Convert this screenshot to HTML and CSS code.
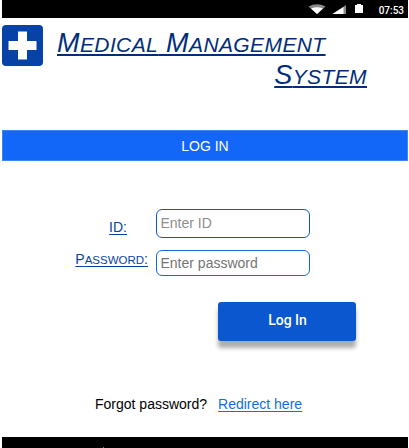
FILE: index.html
```
<!DOCTYPE html>
<html lang="en">
<head>
<meta charset="utf-8">
<title>Medical Management System</title>
<link rel="stylesheet" href="styles.css">
</head>
<body>
<div class="screen">
  <header class="status">
    <svg class="status-icons" width="56" height="18" viewBox="0 0 56 18">
      <path d="M-.5 6.500Q8 2 16.500 6.500L8 14Z" fill="#8a8a8a"/>
      <path d="M2 8.500Q8 6 14 8.500L8 14Z" fill="#fff"/>
      <path d="M23.500 14L37 5V14Z" fill="#8a8a8a"/>
      <path d="M23.500 14L34.500 7V14Z" fill="#fff"/>
      <path d="M46 5H48V4H52V5H54V13H46Z" fill="#fff"/>
    </svg>
    <span class="clock">07:53</span>
  </header>
  <div class="brand">
    <svg class="logo" width="41" height="41" viewBox="0 0 41 41">
      <rect width="41" height="41" rx="4" fill="#0743a6"/>
      <path d="M16 6.500H25V16H34.500V25H25V34.500H16V25H6.500V16H16Z" fill="#fff"/>
    </svg>
    <h1 class="title"><span class="line">M<span class="sc">edical</span> M<span class="sc">anagement</span></span><span class="line line-end">S<span class="sc">ystem</span></span></h1>
  </div>
  <div class="banner">LOG IN</div>
  <form class="form">
    <div class="row row-id">
      <div class="label"><label for="uid">ID:</label></div>
      <input class="field" id="uid" type="text" placeholder="Enter ID">
    </div>
    <div class="row row-pass">
      <div class="label label-caps"><label for="pass">P<span class="sc">assword</span>:</label></div>
      <input class="field" id="pass" type="password" placeholder="Enter password">
    </div>
    <button class="submit" type="button">Log In</button>
  </form>
  <p class="help"><span>Forgot password?</span><a href="#">Redirect here</a></p>
  <footer class="navbar"><span class="nav-mark"></span></footer>
</div>
</body>
</html>
```
FILE: styles.css
```
* { box-sizing: border-box; }
body {
  margin: 0;
  background: #fff;
  font-family: "Liberation Sans", Arial, sans-serif;
  font-size: 14px;
  overflow: hidden;
}
.screen {
  width: 406px;
  height: 448px;
  margin-left: 2px;
  display: flex;
  flex-direction: column;
}
.status {
  height: 18px;
  background: #000;
  color: #fff;
  display: flex;
  justify-content: flex-end;
  padding-right: 4px;
}
.status-icons {
  margin-right: 14px;
  overflow: visible;
}
.clock {
  font: 500 10px/21px Roboto, sans-serif;
  white-space: nowrap;
}
.brand {
  display: flex;
  height: 112px;
  padding-top: 7px;
}
.title {
  margin: 2px 0 0 14px;
  width: 310px;
  color: #002e7a;
  font-size: 27px;
  font-weight: 400;
  font-style: italic;
  line-height: 32px;
}
.line {
  display: block;
  width: max-content;
  height: 32px;
  letter-spacing: .4px;
  text-decoration: underline;
  text-decoration-thickness: 2px;
  text-underline-offset: 2px;
  text-decoration-skip-ink: none;
}
.line-end { margin-left: auto; }
.sc {
  font-size: 21px;
  line-height: 1;
  text-transform: uppercase;
}
.banner {
  height: 31px;
  border: 1px solid #3c87f5;
  background: #1266f8;
  color: #fff;
  text-align: center;
  line-height: 30px;
}
.form {
  display: flex;
  flex-direction: column;
  padding-top: 48px;
}
.row { display: flex; }
.row-pass { margin-top: 12px; }
.label {
  width: 154px;
  padding: 10px 29px 0 0;
  color: #0743a6;
  text-align: right;
  text-decoration: underline;
  text-decoration-skip-ink: none;
  text-underline-offset: 2px;
  line-height: 16px;
}
.label-caps { padding: 1px 8px 0 0; }
.label-caps .sc { font-size: 11.500px; }
.field {
  width: 154px;
  height: 29px;
  border: 1px solid #0b57d0;
  border-radius: 6px;
  padding: 0 3.500px 1px;
  background: #fff;
  font: 14px "Liberation Sans", Arial, sans-serif;
}
.row-pass .field {
  height: 26px;
  padding-bottom: 0;
  border-color: #1266e8;
}
.field::placeholder { color: #757575; }
.row-id .field::placeholder { color: #8e8e8e; }
.submit {
  width: 138px;
  height: 39px;
  margin: 26px 0 0 216px;
  border: 0;
  border-radius: 3px;
  padding: 0 0 3px 1px;
  background: #0b57d0;
  color: #fff;
  box-shadow: 0 7px 4px rgba(0, 0, 0, .32);
  font: 500 14px Roboto, sans-serif;
}
.help {
  display: flex;
  gap: 11px;
  margin: 55px 0 0 93px;
  line-height: 16px;
  white-space: nowrap;
}
.help a {
  color: #0b6fe8;
  text-underline-offset: 2px;
}
.navbar {
  display: flex;
  align-items: flex-end;
  height: 11px;
  margin-top: auto;
  padding-left: 101px;
  background: #000;
}
.nav-mark {
  width: 1px;
  height: 1px;
  background: #777;
}
```
